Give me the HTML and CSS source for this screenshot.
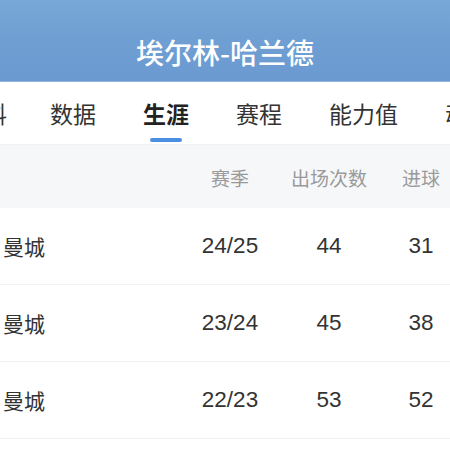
FILE: index.html
```html
<!DOCTYPE html>
<html lang="zh-CN">
<head>
	<meta charset="UTF-8">
	<title>埃尔林-哈兰德</title>
	<link rel="stylesheet" href="styles.css">
</head>
<body>
	<div class="topbar">
		<h1>埃尔林-哈兰德</h1>
	</div>
	<div class="tabs">
		<span class="tab">资料</span>
		<span class="tab">数据</span>
		<span class="tab active">生涯</span>
		<span class="tab">赛程</span>
		<span class="tab">能力值</span>
		<span class="tab">动态</span>
	</div>
	<div class="career">
		<div class="row head">
			<span class="team"></span>
			<span>赛季</span>
			<span>出场次数</span>
			<span>进球</span>
		</div>
		<div class="row">
			<span class="team">曼城</span>
			<span>24/25</span>
			<span>44</span>
			<span>31</span>
		</div>
		<div class="row">
			<span class="team">曼城</span>
			<span>23/24</span>
			<span>45</span>
			<span>38</span>
		</div>
		<div class="row">
			<span class="team">曼城</span>
			<span>22/23</span>
			<span>53</span>
			<span>52</span>
		</div>
	</div>
</body>
</html>
```

FILE: styles.css
```css
body {
	margin: 0;
	width: 450px;
	overflow: hidden;
	background: #fff;
	font-family: "Noto Sans CJK SC", "Noto Sans", sans-serif;
	color: #333;
}

.topbar {
	height: 82px;
	display: flex;
	align-items: flex-end;
	justify-content: center;
	background: linear-gradient(180deg, #78a8d7 0%, #6e9ed2 55%, #6a9ad0 100%);
	border-bottom: 1px solid #8fb7df;
	box-sizing: border-box;
}

.topbar h1 {
	margin: 0 0 11px;
	font-size: 28px;
	font-weight: 500;
	line-height: 36px;
	color: #fff;
}

.tabs {
	height: 63px;
	display: flex;
	align-items: center;
	gap: 47px;
	margin-left: -39px;
	white-space: nowrap;
	border-bottom: 1px solid #f0f1f3;
	box-sizing: border-box;
}

.tab {
	position: relative;
	font-size: 23px;
	line-height: 30px;
	color: #333;
	flex-shrink: 0;
}

.tab:first-child {
	margin-right: -4px;
}

.tab.active {
	font-weight: bold;
	color: #222;
}

.tab.active::after {
	content: "";
	position: absolute;
	left: 7px;
	right: 7px;
	bottom: -14px;
	height: 4px;
	border-radius: 2px;
	background: #4a8fe2;
}

.row {
	display: grid;
	grid-template-columns: 184px 92px 106px 78px;
	align-items: center;
	height: 77px;
	border-bottom: 1px solid #f1f2f4;
	box-sizing: border-box;
	font-family: "Liberation Sans", "Noto Sans CJK SC", sans-serif;
	font-size: 22.5px;
	color: #333;
}

.row span {
	text-align: center;
}

.row .team {
	text-align: left;
	padding-left: 3px;
	font-family: "Noto Sans CJK SC", sans-serif;
	font-size: 21px;
}

.row.head {
	height: 63px;
	background: #f6f7f9;
	border-bottom: none;
	font-family: "Noto Sans CJK SC", sans-serif;
	font-size: 19px;
	color: #9a9a9a;
	padding-top: 2px;
}
```
